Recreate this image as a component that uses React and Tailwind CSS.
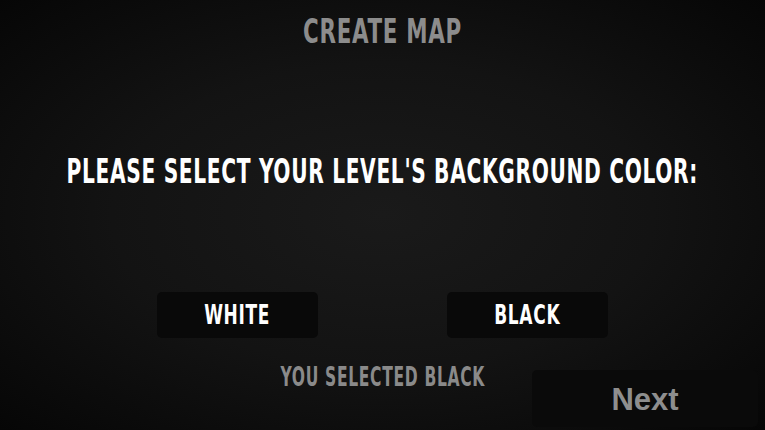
import React, { useState } from 'react';

const condensed = { fontFamily: '"DejaVu Sans Condensed", "DejaVu Sans", sans-serif' };

function App() {
  const [color, setColor] = useState('BLACK');

  return (
    <div className="relative w-[765px] h-[430px] overflow-hidden bg-[radial-gradient(ellipse_at_center,#1a1a1a_0%,#131313_50%,#060606_100%)] flex flex-col items-center select-none" style={condensed}>
      <h1 className="mt-[13px] h-[36px] flex items-center font-bold text-[34px] text-[#8c8c8c] scale-x-[0.70] tracking-[1px]">
        CREATE MAP
      </h1>

      <h2 className="mt-[101px] h-[42px] flex items-center font-bold text-[34px] text-white whitespace-nowrap scale-x-[0.66] tracking-[1px]">
        PLEASE SELECT YOUR LEVEL'S BACKGROUND COLOR:
      </h2>

      <div className="mt-[100px] flex gap-[129px]">
        {['WHITE', 'BLACK'].map((c) => (
          <button
            key={c}
            onClick={() => setColor(c)}
            className="w-[161px] h-[46px] rounded-[5px] bg-[#090909] flex items-center justify-center"
          >
            <span className="font-bold text-[27px] text-white scale-x-[0.70] tracking-[1px]">{c}</span>
          </button>
        ))}
      </div>

      <p className="mt-[20px] font-bold text-[26px] text-[#8a8a8a] whitespace-nowrap scale-x-[0.665] tracking-[1px]">
        YOU SELECTED {color}
      </p>

      <button
        className="absolute right-[7px] bottom-[3px] w-[226px] h-[57px] rounded-[5px] bg-[#0a0a0a] flex items-center justify-center"
        style={{ fontFamily: '"Liberation Sans", Arial, sans-serif' }}
      >
        <span className="font-bold text-[31px] text-[#8e8e8e] mt-[3px]">Next</span>
      </button>
    </div>
  );
}

export default App;
